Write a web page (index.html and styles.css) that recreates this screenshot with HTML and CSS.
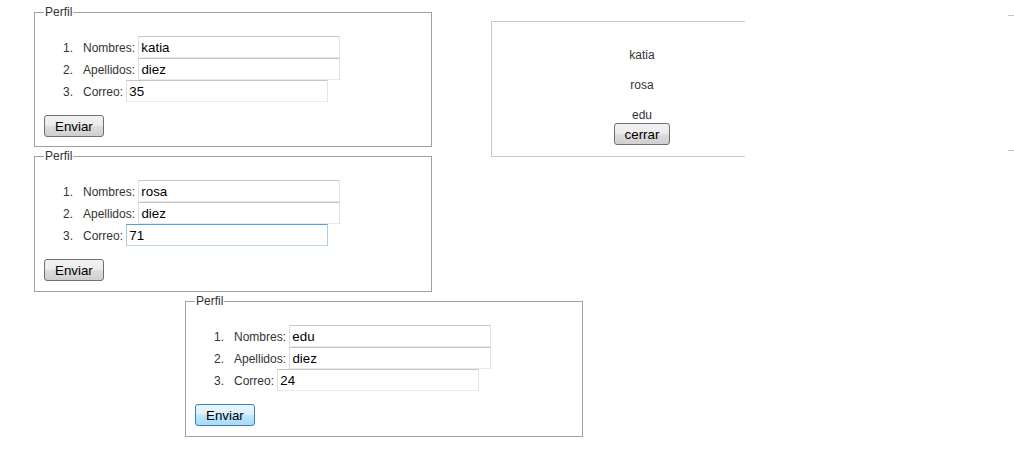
FILE: index.html
```html
<!doctype html>
<html lang="es">
<head>
    <meta charset="utf-8">
    <title>Perfiles</title>
    <link rel="stylesheet" href="styles.css">
</head>
<body>
    <div class="page">
        <form class="perfil">
            <fieldset>
                <legend>Perfil</legend>
                <ol>
                    <li><label for="nombres1">Nombres:</label> <input type="text" id="nombres1" class="campo" value="katia"></li>
                    <li><label for="apellidos1">Apellidos:</label> <input type="text" id="apellidos1" class="campo" value="diez"></li>
                    <li><label for="correo1">Correo:</label> <input type="text" id="correo1" class="campo" value="35"></li>
                </ol>
                <button type="button" class="boton">Enviar</button>
            </fieldset>
        </form>
        <form class="perfil">
            <fieldset>
                <legend>Perfil</legend>
                <ol>
                    <li><label for="nombres2">Nombres:</label> <input type="text" id="nombres2" class="campo" value="rosa"></li>
                    <li><label for="apellidos2">Apellidos:</label> <input type="text" id="apellidos2" class="campo" value="diez"></li>
                    <li><label for="correo2">Correo:</label> <input type="text" id="correo2" class="campo campo-activo" value="71"></li>
                </ol>
                <button type="button" class="boton">Enviar</button>
            </fieldset>
        </form>
        <form class="perfil perfil-movido">
            <fieldset>
                <legend>Perfil</legend>
                <ol>
                    <li><label for="nombres3">Nombres:</label> <input type="text" id="nombres3" class="campo" value="edu"></li>
                    <li><label for="apellidos3">Apellidos:</label> <input type="text" id="apellidos3" class="campo" value="diez"></li>
                    <li><label for="correo3">Correo:</label> <input type="text" id="correo3" class="campo" value="24"></li>
                </ol>
                <button type="button" class="boton boton-hover">Enviar</button>
            </fieldset>
        </form>
    </div>

    <div class="ventana">
        <div class="dialogo">
            <p>katia</p>
            <p>rosa</p>
            <p>edu</p>
            <button type="button" class="boton" onclick="cerrarDialogo()">cerrar</button>
        </div>
    </div>
    <div class="ventana ventana-fuera"></div>

    <script>
        function cerrarDialogo() {
            document.querySelector('.ventana').style.display = 'none';
        }
    </script>
</body>
</html>
```

FILE: styles.css
```css
body {
    font-family: "Liberation Sans", Arial, sans-serif;
    font-size: 12px;
    color: #333;
    margin: 0;
    background-color: #ffffff;
}
.page {
    padding: 5px 0 0 34px;
}
.perfil {
    margin: 0 0 2px;
    width: 398px;
}
.perfil-movido {
    margin-left: 151px;
}
.perfil fieldset {
    margin: 0;
    padding: 0 9px 9px;
    border: 1px solid #a0a0a0;
    box-sizing: border-box;
}
.perfil + .perfil fieldset {
    padding-bottom: 10px;
}
.perfil-movido fieldset {
    padding-bottom: 11px;
}
.perfil legend {
    padding: 0 1px;
    line-height: 14px;
    color: #333;
}
.perfil ol {
    margin: 17px 0 13px;
    padding-left: 39px;
}
.perfil li {
    height: 22px;
    line-height: 22px;
}
.perfil li::marker {
    content: counter(list-item) ".\00a0\00a0\00a0";
}
.campo {
    font-family: "Liberation Sans", Arial, sans-serif;
    font-size: 13.33px;
    color: #000;
    width: 202px;
    height: 22px;
    box-sizing: border-box;
    padding: 0 2px;
    margin: 0;
    border: 1px solid;
    border-color: #c3c6cd #e2e3ea #e3e9ef #dbdfe6;
    vertical-align: baseline;
    outline: none;
}
.campo-activo {
    border-color: #5c9ad2 #a9cdeb #b6d5ee #a9cdeb;
}
.boton {
    font-family: "Liberation Sans", Arial, sans-serif;
    font-size: 13.33px;
    color: #000;
    height: 22px;
    padding: 0 10px;
    margin: 0;
    border: 1px solid #707070;
    border-radius: 3px;
    background: linear-gradient(#f2f2f2 0%, #ebebeb 48%, #dddddd 52%, #cfcfcf 100%);
    cursor: pointer;
}
.boton-hover {
    border-color: #3c7fb1;
    background: linear-gradient(#eaf6fd 0%, #d9f0fc 48%, #bee6fd 52%, #a7d9f5 100%);
}
.ventana {
    position: absolute;
    left: 491px;
    top: 21px;
    width: 254px;
    height: 136px;
    overflow: hidden;
}
.ventana-fuera {
    left: 1008px;
    top: 15px;
    width: 6px;
    border-top: 1px solid #b7c7d7;
    border-bottom: 1px solid #b7c7d7;
    box-sizing: border-box;
}
.dialogo {
    width: 280px;
    height: 114px;
    padding: 10px;
    border: 1px solid #bccbda;
    text-align: center;
    color: #333;
}
.dialogo p {
    margin: 16px 0 0;
    line-height: 14px;
}
.dialogo .boton {
    margin-top: 1px;
}
```
